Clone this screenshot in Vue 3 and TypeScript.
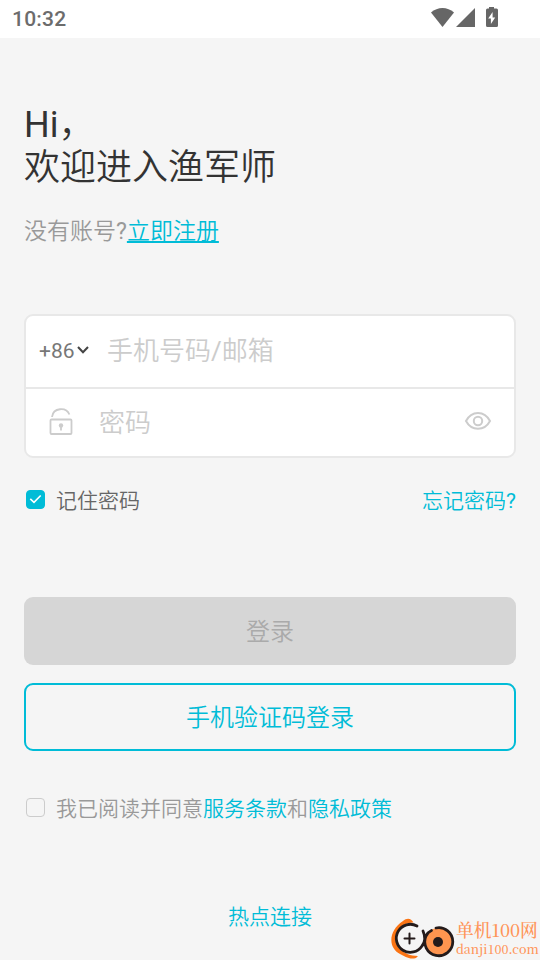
<script setup lang="ts">
import { ref } from 'vue'

const account = ref('')
const password = ref('')
const remember = ref(true)
const agreed = ref(false)
const showPassword = ref(false)
</script>

<template>
  <div class="screen">
    <header class="status-bar">
      <span class="clock">10:32</span>
      <svg class="status-icons" width="70" height="24" viewBox="0 0 70 24">
        <path d="M1 8.600C7.500 2.400 17.500 2.400 24 8.600L12.500 23Z" />
        <path d="M45 4V23H26Z" />
        <path fill-rule="evenodd" d="M59 3h5v1.500h2.500q1.500 0 1.500 1.500v15.500q0 1.500-1.500 1.500h-9q-1.500 0-1.500-1.500V6q0-1.500 1.500-1.500h1.500ZM62.600 8l-4.400 6.500h2.700V20l4.300-6.600h-2.600Z" />
      </svg>
    </header>

    <main class="content">
      <h1 class="title">Hi，<br />欢迎进入渔军师</h1>
      <p class="register">没有账号?<a class="register-link">立即注册</a></p>

      <section class="form">
        <label class="field field-account">
          <span class="area-code">+86</span>
          <svg class="chevron" width="14" height="10" viewBox="0 0 14 10">
            <path d="M2 2L7 7.300L12 2" />
          </svg>
          <input v-model="account" class="input" type="text" placeholder="手机号码/邮箱" />
        </label>
        <label class="field field-password">
          <svg class="lock" width="26" height="28" viewBox="0 0 26 28">
            <rect x="2.500" y="11.500" width="21" height="14.500" rx="1" />
            <path d="M4 9C5.200-.5 18.200-1.300 21.400 6.500M13 18.500v4" />
            <circle class="keyhole" cx="13" cy="17.500" r="2.200" />
          </svg>
          <input v-model="password" class="input" :type="showPassword ? 'text' : 'password'" placeholder="密码" />
          <svg class="eye" width="28" height="20" viewBox="0 0 28 20" @click="showPassword = !showPassword">
            <path d="M2 10C7.500-.8 20.500-.8 26 10C20.500 20.300 7.500 20.300 2 10Z" />
            <circle cx="14" cy="10" r="4.200" />
          </svg>
        </label>
      </section>

      <div class="options">
        <span class="check-row" @click="remember = !remember">
          <span class="box" :class="{ checked: remember }">
            <svg v-if="remember" width="13" height="10" viewBox="0 0 13 10"><path d="M1.300 4.800L5 8.300L11.700 1.500" /></svg>
          </span>
          <span class="remember">记住密码</span>
        </span>
        <a class="link">忘记密码?</a>
      </div>

      <button class="button login" disabled>登录</button>
      <button class="button sms">手机验证码登录</button>

      <div class="agreement">
        <span class="box" :class="{ checked: agreed }" @click="agreed = !agreed">
          <svg v-if="agreed" width="13" height="10" viewBox="0 0 13 10"><path d="M1.300 4.800L5 8.300L11.700 1.500" /></svg>
        </span>
        <span>我已阅读并同意<a class="link">服务条款</a>和<a class="link">隐私政策</a></span>
      </div>

      <a class="link hotspot">热点连接</a>
    </main>

    <aside class="watermark">
      <svg class="logo" width="65" height="43" viewBox="0 0 65 43">
        <path class="swoosh" d="M22.500 5.500C20 1 16 .5 12 4C-3 14-3 31 9 37C14 39 18 43 25 41L27 39C19 39 14 36 10 33C2 26 3 15 11 9C14 6.500 18 5.800 22.500 5.500Z" />
        <circle class="disc" cx="47.500" cy="25" r="14" />
        <path class="ring" d="M26 9A14 14 0 1 0 31 29Q36 23 32 14M35 19Q37 15 40.500 13.500M45 11A14 14 0 1 1 35 19" />
        <circle class="hub" cx="47" cy="25" r="5" />
        <path class="plus" d="M18.500 16.500v10M13.500 21.500h10" />
      </svg>
      <div class="brand">
        <span class="brand-name">单机100网</span>
        <span class="brand-url">danji100.com</span>
      </div>
    </aside>
  </div>
</template>

<style>
body {
  margin: 0;
  background: #f5f5f5;
}
</style>

<style scoped>
.screen {
  position: relative;
  width: 540px;
  height: 960px;
  overflow: hidden;
  background: #f5f5f5;
  color: #333;
  font-family: Roboto, "Noto Sans CJK SC DemiLight", "Noto Sans CJK SC", sans-serif;
}
.status-bar {
  display: flex;
  justify-content: space-between;
  box-sizing: border-box;
  height: 38px;
  padding: 2px 40px 0 12px;
  background: #fff;
}
.clock {
  color: #6c6c6c;
  font-size: 21px;
  font-weight: 500;
  line-height: 34px;
  letter-spacing: 0.2px;
}
.status-icons {
  display: block;
  margin-top: 2px;
  fill: #666;
}
.content {
  display: flex;
  flex-direction: column;
  padding: 66px 24px 0;
}
.title {
  margin: 0;
  font-size: 36px;
  font-weight: 400;
  line-height: 43px;
}
.register {
  margin: 26px 0 0;
  color: #999;
  font-size: 23px;
  line-height: 32px;
}
.register-link {
  color: #00bcd7;
  text-decoration: underline;
  text-decoration-thickness: 1.5px;
  text-underline-offset: 2px;
}
.form {
  box-sizing: border-box;
  height: 144px;
  margin-top: 66px;
  border: 2px solid #e8e8e8;
  border-radius: 9px;
  background: #fff;
}
.field {
  display: flex;
  align-items: center;
  box-sizing: border-box;
}
.field-account {
  height: 73px;
  padding: 0 0 2px 13px;
  border-bottom: 2px solid #e8e8e8;
}
.field-password {
  height: 67px;
  padding: 0 22px 2px;
}
.area-code {
  width: 37px;
  color: #777;
  font-size: 21px;
}
.chevron {
  margin: -1px 17px 0 0;
  fill: none;
  stroke: #444;
  stroke-width: 2;
}
.input {
  flex: 1;
  min-width: 0;
  height: 44px;
  padding: 0;
  border: 0;
  outline: 0;
  background: transparent;
  color: #333;
  font-family: inherit;
  font-size: 26px;
}
.field-password .input {
  padding-top: 2px;
}
.input::placeholder {
  color: #ccc;
  opacity: 1;
}
.lock {
  margin-right: 25px;
  fill: none;
  stroke: #ccc;
  stroke-width: 1.8;
}
.keyhole {
  fill: #ccc;
  stroke: none;
}
.eye {
  margin-top: -1px;
  fill: none;
  stroke: #ccc;
  stroke-width: 2;
}
.options {
  display: flex;
  justify-content: space-between;
  align-items: center;
  height: 30px;
  margin-top: 26px;
  font-size: 21px;
}
.check-row,
.agreement {
  display: flex;
  align-items: center;
}
.box {
  display: flex;
  align-items: center;
  justify-content: center;
  box-sizing: border-box;
  width: 19px;
  height: 19px;
  margin: 0 11px 0 2px;
  border: 1px solid #ccc;
  border-radius: 4px;
}
.box.checked {
  border-color: #00bcd7;
  background: #00bcd7;
}
.box svg {
  fill: none;
  stroke: #fff;
  stroke-width: 1.6;
}
.remember {
  color: #666;
}
.link {
  color: #00bcd7;
}
.button {
  box-sizing: border-box;
  width: 100%;
  height: 68px;
  padding: 0 0 3px;
  border: 0;
  border-radius: 9px;
  font-family: inherit;
  font-size: 24px;
}
.login {
  margin-top: 83px;
  background: #d6d6d6;
  color: #aaa;
}
.sms {
  margin-top: 18px;
  border: 2px solid #00bcd7;
  background: transparent;
  color: #00bcd7;
}
.agreement {
  height: 30px;
  margin-top: 41px;
  color: #999;
  font-size: 21px;
}
.agreement .box {
  margin-top: 1px;
}
.hotspot {
  align-self: center;
  margin-top: 80px;
  font-size: 21px;
  line-height: 30px;
}
.watermark {
  position: absolute;
  right: 0;
  bottom: 0;
  display: flex;
  width: 149px;
  height: 43px;
}
.logo {
  flex: none;
}
.swoosh {
  fill: #fa7414;
}
.disc {
  fill: #ff954f;
}
.ring,
.plus {
  fill: none;
  stroke: #241b1b;
  stroke-width: 2.8;
  stroke-linecap: round;
}
.plus {
  stroke-width: 2;
}
.hub {
  fill: #241b1b;
}
.brand {
  display: flex;
  flex-direction: column;
  padding-top: 2px;
  color: #ff9458;
  font-family: "Noto Serif CJK SC", "Liberation Serif", "Noto Sans CJK SC", serif;
  font-weight: 500;
  white-space: nowrap;
}
.brand-name {
  font-size: 17.8px;
  line-height: 22px;
}
.brand-url {
  font-size: 12.5px;
  line-height: 17px;
}
</style>
